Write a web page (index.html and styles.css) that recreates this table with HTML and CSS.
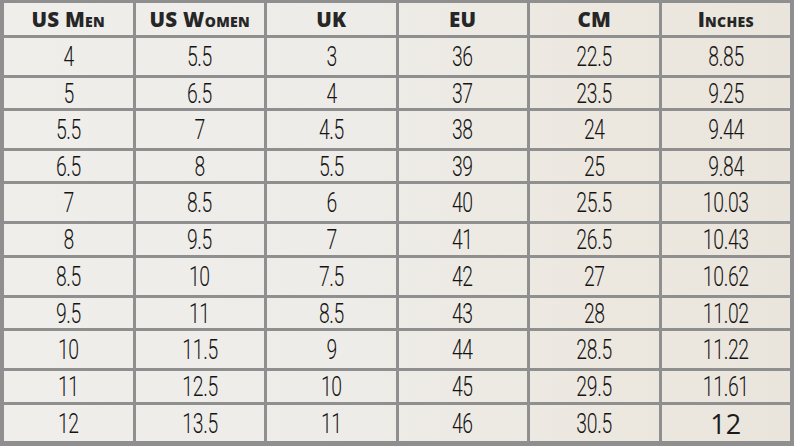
FILE: index.html
```html
<!DOCTYPE html>
<html lang="en">
<head>
<meta charset="utf-8">
<title>Shoe Size Chart</title>
<link rel="stylesheet" href="styles.css">
</head>
<body>
<div class="chart">
  <div class="cell head">US Men</div>
  <div class="cell head">US Women</div>
  <div class="cell head">UK</div>
  <div class="cell head">EU</div>
  <div class="cell head">CM</div>
  <div class="cell head">Inches</div>

  <div class="cell"><span class="num">4</span></div>
  <div class="cell"><span class="num">5.5</span></div>
  <div class="cell"><span class="num">3</span></div>
  <div class="cell"><span class="num">36</span></div>
  <div class="cell"><span class="num">22.5</span></div>
  <div class="cell"><span class="num">8.85</span></div>

  <div class="cell"><span class="num">5</span></div>
  <div class="cell"><span class="num">6.5</span></div>
  <div class="cell"><span class="num">4</span></div>
  <div class="cell"><span class="num">37</span></div>
  <div class="cell"><span class="num">23.5</span></div>
  <div class="cell"><span class="num">9.25</span></div>

  <div class="cell"><span class="num">5.5</span></div>
  <div class="cell"><span class="num">7</span></div>
  <div class="cell"><span class="num">4.5</span></div>
  <div class="cell"><span class="num">38</span></div>
  <div class="cell"><span class="num">24</span></div>
  <div class="cell"><span class="num">9.44</span></div>

  <div class="cell"><span class="num">6.5</span></div>
  <div class="cell"><span class="num">8</span></div>
  <div class="cell"><span class="num">5.5</span></div>
  <div class="cell"><span class="num">39</span></div>
  <div class="cell"><span class="num">25</span></div>
  <div class="cell"><span class="num">9.84</span></div>

  <div class="cell"><span class="num">7</span></div>
  <div class="cell"><span class="num">8.5</span></div>
  <div class="cell"><span class="num">6</span></div>
  <div class="cell"><span class="num">40</span></div>
  <div class="cell"><span class="num">25.5</span></div>
  <div class="cell"><span class="num">10.03</span></div>

  <div class="cell"><span class="num">8</span></div>
  <div class="cell"><span class="num">9.5</span></div>
  <div class="cell"><span class="num">7</span></div>
  <div class="cell"><span class="num">41</span></div>
  <div class="cell"><span class="num">26.5</span></div>
  <div class="cell"><span class="num">10.43</span></div>

  <div class="cell"><span class="num">8.5</span></div>
  <div class="cell"><span class="num">10</span></div>
  <div class="cell"><span class="num">7.5</span></div>
  <div class="cell"><span class="num">42</span></div>
  <div class="cell"><span class="num">27</span></div>
  <div class="cell"><span class="num">10.62</span></div>

  <div class="cell"><span class="num">9.5</span></div>
  <div class="cell"><span class="num">11</span></div>
  <div class="cell"><span class="num">8.5</span></div>
  <div class="cell"><span class="num">43</span></div>
  <div class="cell"><span class="num">28</span></div>
  <div class="cell"><span class="num">11.02</span></div>

  <div class="cell"><span class="num">10</span></div>
  <div class="cell"><span class="num">11.5</span></div>
  <div class="cell"><span class="num">9</span></div>
  <div class="cell"><span class="num">44</span></div>
  <div class="cell"><span class="num">28.5</span></div>
  <div class="cell"><span class="num">11.22</span></div>

  <div class="cell"><span class="num">11</span></div>
  <div class="cell"><span class="num">12.5</span></div>
  <div class="cell"><span class="num">10</span></div>
  <div class="cell"><span class="num">45</span></div>
  <div class="cell"><span class="num">29.5</span></div>
  <div class="cell"><span class="num">11.61</span></div>

  <div class="cell"><span class="num">12</span></div>
  <div class="cell"><span class="num">13.5</span></div>
  <div class="cell"><span class="num">11</span></div>
  <div class="cell"><span class="num">46</span></div>
  <div class="cell"><span class="num">30.5</span></div>
  <div class="cell"><span class="plain">12</span></div>
</div>
</body>
</html>
```

FILE: styles.css
```css
html, body {
  margin: 0;
  padding: 0;
  background: #929292;
}

.chart {
  width: 794px;
  height: 446px;
  box-sizing: border-box;
  padding: 3px 4px 5px 4px;
  display: grid;
  grid-template-columns: repeat(6, 1fr);
  grid-template-rows: 31.5px 37px 30.5px 36.5px 30px 37px 31px 37px 30px 37px 31px 36.5px;
  gap: 3px;
  background: #8f8f8f;
}

.cell {
  display: flex;
  align-items: center;
  justify-content: center;
  background: linear-gradient(90deg, #efeeeb 0%, #eeece8 45%, #ece8e0 75%, #eae5dc 100%) fixed;
  color: #262626;
}

.head {
  font-family: "Open Sans", "DejaVu Sans", sans-serif;
  font-weight: 800;
  font-size: 20.5px;
  line-height: 24px;
  font-variant: small-caps;
  color: #262626;
  letter-spacing: 0.3px;
}

.num {
  display: inline-block;
  font-family: Roboto, "Liberation Sans", sans-serif;
  font-weight: 300;
  font-size: 28.5px;
  line-height: 24px;
  letter-spacing: -0.5px;
  color: #141414;
  transform: scaleX(0.68);
  padding-top: 2px;
}

.plain {
  font-family: "Open Sans", "DejaVu Sans", sans-serif;
  font-weight: 500;
  font-size: 27px;
  line-height: 26px;
  color: #1a1a1a;
  padding-top: 3px;
}
```
